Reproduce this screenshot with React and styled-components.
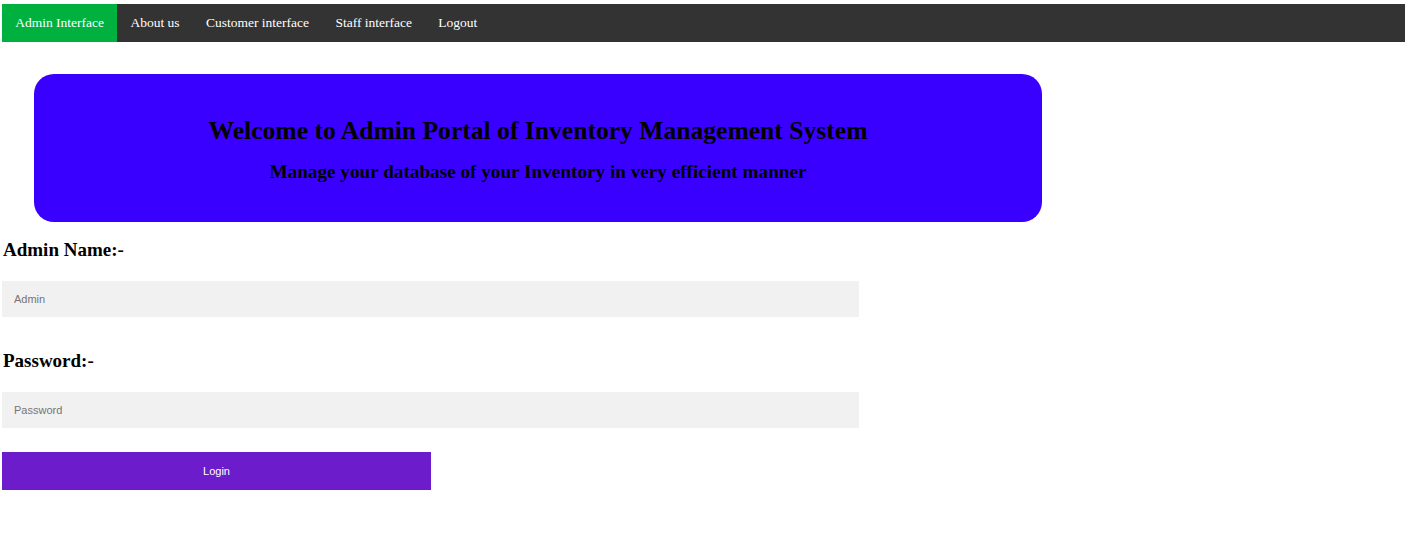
import React from "react";
import styled, { createGlobalStyle } from "styled-components";

const Global = createGlobalStyle`
  html, body { margin: 0; padding: 0; background: #fff; }
  body { font-family: "Liberation Serif", "Times New Roman", serif; color: #000; }
`;

const Page = styled.div`
  padding: 4px 0 0 2px;
`;

const Nav = styled.nav`
  display: flex;
  height: 38px;
  background: #333333;
`;

const NavItem = styled.a`
  display: flex;
  align-items: center;
  padding: 0 13.2px;
  font-size: 13.5px;
  color: #fff;
  text-decoration: none;
  background: ${(p) => (p.$active ? "#00b140" : "transparent")};
`;

const Banner = styled.header`
  margin: 32px 0 0 32px;
  width: 1008px;
  height: 148px;
  box-sizing: border-box;
  background: #3a00ff;
  border-radius: 20px;
  display: flex;
  flex-direction: column;
  align-items: center;
  padding-top: 42px;
`;

const Title = styled.h1`
  margin: 0;
  font-size: 25.6px;
  font-weight: bold;
`;

const Subtitle = styled.h2`
  margin: 15px 0 0;
  font-size: 19.2px;
  font-weight: bold;
`;

const Form = styled.form`
  display: flex;
  flex-direction: column;
  align-items: flex-start;
`;

const Label = styled.h3`
  margin: ${(p) => p.$top}px 0 0 1px;
  font-size: 19px;
  font-weight: bold;
  line-height: 22px;
`;

const Input = styled.input`
  margin-top: 20px;
  width: 857px;
  height: 36px;
  box-sizing: border-box;
  border: none;
  outline: none;
  background: #f1f1f1;
  padding: 0 12px;
  font-family: "Liberation Sans", Arial, sans-serif;
  font-size: 11px;
  color: #333;
  &::placeholder { color: #757575; }
`;

const Button = styled.button`
  margin-top: 24px;
  width: 429px;
  height: 38px;
  border: none;
  background: #6c1ccb;
  color: #fff;
  font-family: "Liberation Sans", Arial, sans-serif;
  font-size: 11px;
  cursor: pointer;
`;

export default function App() {
  return (
    <Page>
      <Global />
      <Nav>
        <NavItem $active href="#">Admin Interface</NavItem>
        <NavItem href="#">About us</NavItem>
        <NavItem href="#">Customer interface</NavItem>
        <NavItem href="#">Staff interface</NavItem>
        <NavItem href="#">Logout</NavItem>
      </Nav>
      <Banner>
        <Title>Welcome to Admin Portal of Inventory Management System</Title>
        <Subtitle>Manage your database of your Inventory in very efficient manner</Subtitle>
      </Banner>
      <Form onSubmit={(e) => e.preventDefault()}>
        <Label $top={17}>Admin Name:-</Label>
        <Input type="text" placeholder="Admin" />
        <Label $top={33}>Password:-</Label>
        <Input type="password" placeholder="Password" />
        <Button type="submit">Login</Button>
      </Form>
    </Page>
  );
}
